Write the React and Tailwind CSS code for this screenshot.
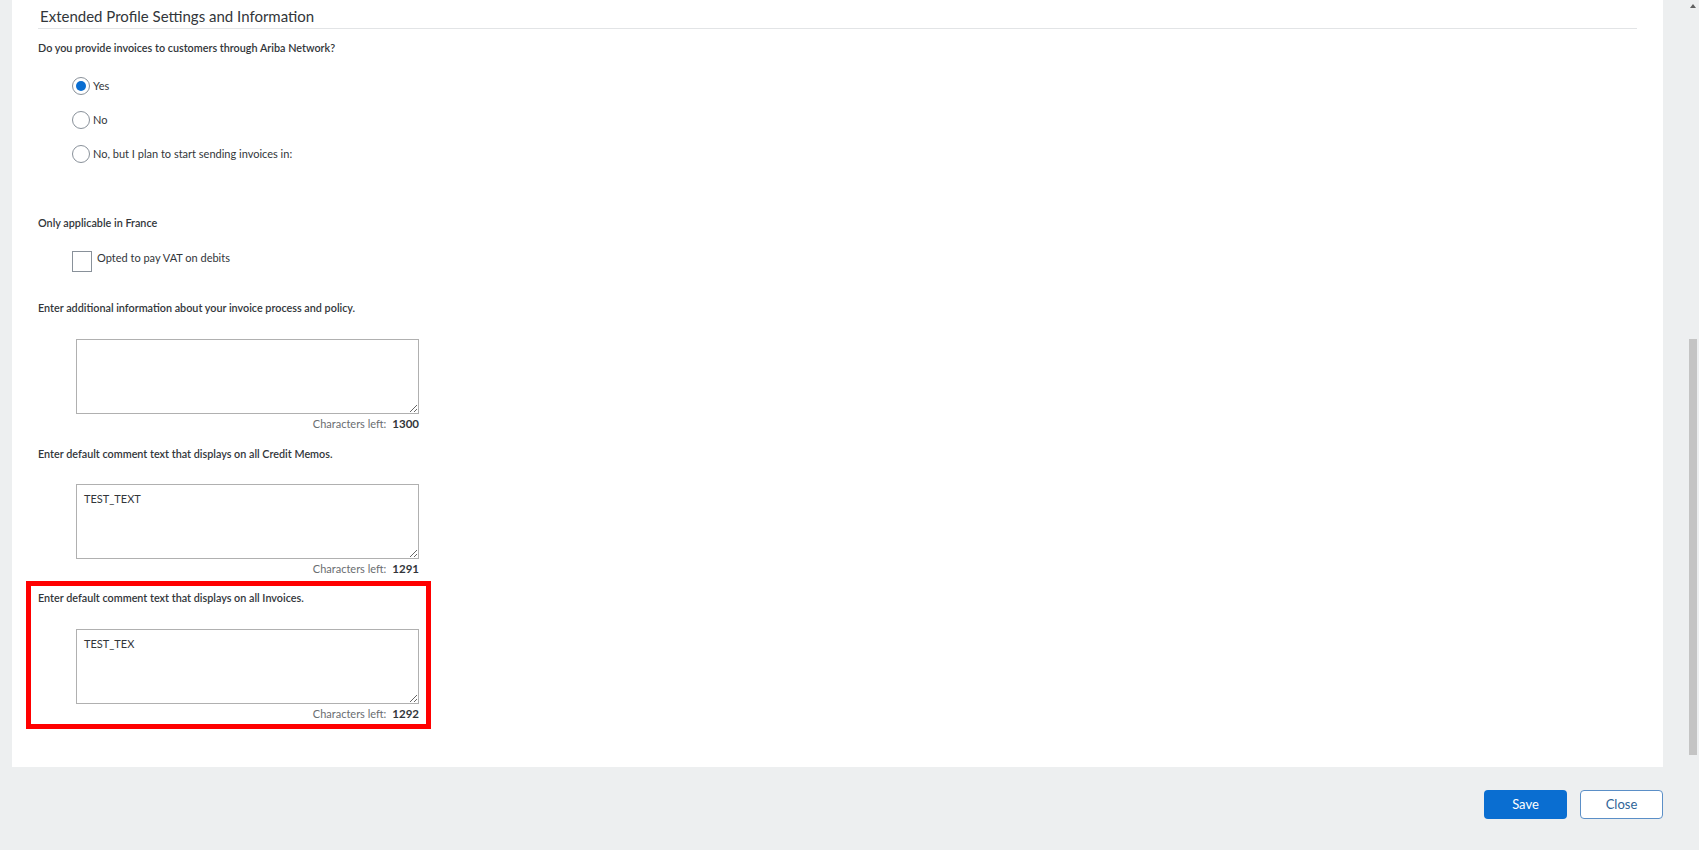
export default function App() {
  const font = "font-['Lato','Noto_Sans',sans-serif]";
  const label = "h-[16px] leading-[16px] text-[10.8px] font-semibold text-[#32363a]";
  const Chars = ({ n }) => (
    <div className="mt-[2px] w-[381px] h-[16px] leading-[16px] text-right text-[11px]">
      <span className="text-[#6a6d70]">Characters left:</span>
      <span className="ml-[6px] font-bold text-[11.5px] text-[#32363a]">{n}</span>
    </div>
  );
  const Area = ({ value, mt }) => (
    <textarea
      readOnly
      defaultValue={value}
      className={`block ml-[38px] w-[343px] h-[75px] border border-[#b0b0b0] bg-white px-[7px] py-[6px] text-[11px] leading-[16px] text-[#32363a] outline-none ${mt}`}
    />
  );
  const Radio = ({ checked, label }) => (
    <div className="flex items-center h-[18px] ml-[34px]">
      <div className="w-[18px] h-[18px] rounded-full border border-[#89919a] bg-white flex items-center justify-center">
        {checked && <div className="w-[10px] h-[10px] rounded-full bg-[#0a6ed1]" />}
      </div>
      <span className="ml-[3px] text-[11px] text-[#32363a]">{label}</span>
    </div>
  );
  return (
    <div className={`w-[1699px] h-[850px] bg-[#edeff0] flex overflow-hidden ${font}`}>
      <div className="flex flex-col pl-[12px]">
        <div className="w-[1651px] h-[767px] bg-white">
          <div className="ml-[26px] w-[1599px] h-[29px] border-b border-[#e2e4e6] pl-[2px] pt-[6px] text-[15px] leading-[20px] text-[#32363a]">
            Extended Profile Settings and Information
          </div>
          <div className="ml-[26px]">
            <div className={`mt-[11px] ${label}`}>
              Do you provide invoices to customers through Ariba Network?
            </div>
            <div className="mt-[21px] flex flex-col gap-[16px]">
              <Radio checked label="Yes" />
              <Radio label="No" />
              <Radio label="No, but I plan to start sending invoices in:" />
            </div>
            <div className={`mt-[52px] ${label}`}>Only applicable in France</div>
            <div className="mt-[20px] ml-[34px] flex items-start">
              <div className="w-[20px] h-[21px] border border-[#89919a] bg-white" />
              <span className="ml-[5px] -mt-[1px] leading-[16px] text-[11px] text-[#32363a]">Opted to pay VAT on debits</span>
            </div>
            <div className={`mt-[28px] ${label}`}>
              Enter additional information about your invoice process and policy.
            </div>
            <Area value="" mt="mt-[23px]" />
            <Chars n="1300" />
            <div className={`mt-[14px] ${label}`}>
              Enter default comment text that displays on all Credit Memos.
            </div>
            <Area value="TEST_TEXT" mt="mt-[22px]" />
            <Chars n="1291" />
            <div className="mt-[4px] -ml-[12px] w-[405px] border-[5px] border-[#ff0000] pl-[7px] pt-[4px] pb-[2px]">
              <div className={label}>
                Enter default comment text that displays on all Invoices.
              </div>
              <Area value="TEST_TEX" mt="mt-[23px]" />
              <Chars n="1292" />
            </div>
          </div>
        </div>
        <div className="flex justify-end gap-[13px] pt-[23px]">
          <button className="w-[83px] h-[29px] rounded-[4px] bg-[#0a6ed1] text-white text-[13px]">Save</button>
          <button className="w-[83px] h-[29px] rounded-[4px] bg-white border border-[#5b8fc7] text-[#2f6497] text-[13px]">Close</button>
        </div>
      </div>
      <div className="w-[36px] flex flex-col items-start pl-[26px]">
        <div className="mt-[4px] ml-[1px] w-0 h-0 border-l-[3px] border-r-[3px] border-b-[4px] border-l-transparent border-r-transparent border-b-[#606060]" />
        <div className="mt-[331px] w-[8px] h-[416px] bg-[#c4c4c4]" />
      </div>
    </div>
  );
}
